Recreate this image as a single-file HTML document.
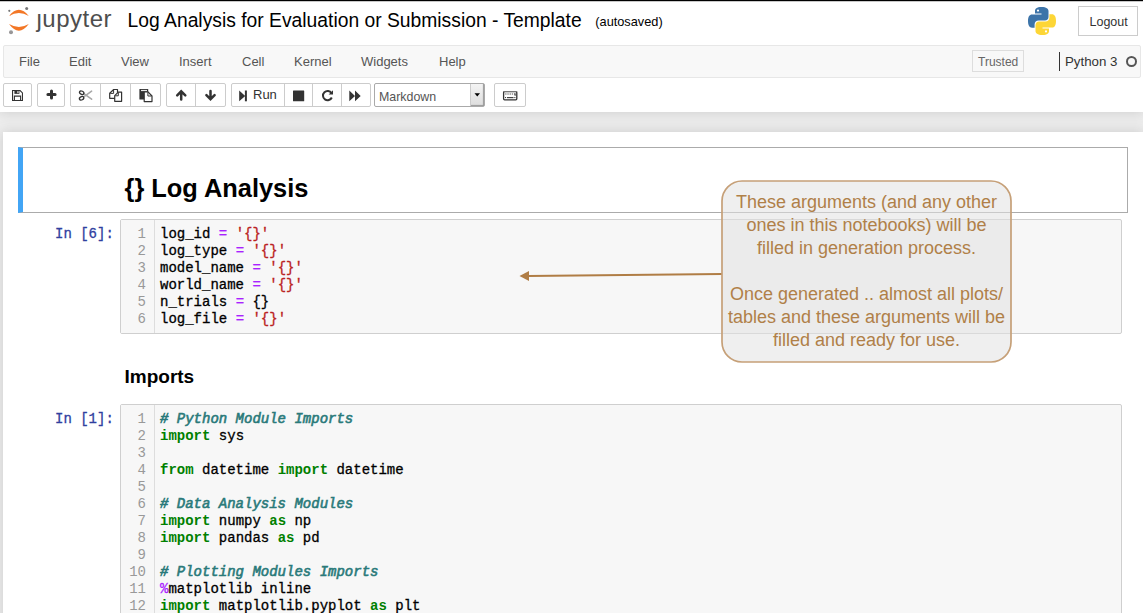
<!DOCTYPE html>
<html><head><meta charset="utf-8">
<style>
*{box-sizing:border-box}
html,body{margin:0;padding:0}
body{width:1143px;height:613px;overflow:hidden;position:relative;background:#eeeeee;font-family:"Liberation Sans",sans-serif;color:#000}
.a{position:absolute;white-space:pre;line-height:1}
#hdr{position:absolute;left:0;top:0;width:1143px;height:112px;background:#fff;box-shadow:0 0 12px 1px rgba(87,87,87,0.2);z-index:2}
#topline{position:absolute;left:0;top:0;width:1143px;height:1px;background:#000;z-index:5}
#topline2{position:absolute;left:0;top:1px;width:1143px;height:1px;background:#c8c8c8;z-index:5}
.menubar{position:absolute;left:3px;top:45px;width:1138px;height:33px;background:#f8f8f8;border:1px solid #e7e7e7;border-radius:2px}
.mi{position:absolute;top:9px;font-size:13px;color:#555;line-height:1}
.btn{position:absolute;top:83px;height:24px;border:1px solid #ccc;border-radius:2px;background:#fff}
.sep{position:absolute;top:84px;height:22px;width:1px;background:#ccc}
#nb{position:absolute;left:3px;top:132px;width:1140px;height:500px;background:#fff;box-shadow:0 0 12px 1px rgba(87,87,87,0.2);z-index:1}
.mono{font-family:"Liberation Mono",monospace}
.input{position:absolute;left:120px;width:1002px;background:#f7f7f7;border:1px solid #cfcfcf;border-radius:2px}
.gut{position:absolute;left:0;top:0;bottom:0;width:34px;border-right:1px solid #ddd;background:#f7f7f7}
.ln{position:absolute;right:8px;color:#999;font-size:14px;line-height:17px;text-align:right}
.code{position:absolute;left:39px;font-size:14px;line-height:17px;color:#000;white-space:pre;-webkit-text-stroke:0.3px currentColor}
.prompt{position:absolute;color:#303F9F;font-size:14px;line-height:17px;white-space:pre;-webkit-text-stroke:0.3px currentColor}
.k{color:#008000;font-weight:bold;-webkit-text-stroke:0}
.o{color:#AA22FF}
.s{color:#BA2121}
.c{color:#2a7a7a;font-style:italic;-webkit-text-stroke:0.6px currentColor}
</style></head>
<body>
<div id="topline"></div><div id="topline2"></div>
<div id="hdr">
  <!-- jupyter logo -->
  <svg style="position:absolute;left:0;top:0" width="36" height="36" viewBox="0 0 36 36">
    <path d="M9 16 Q18.9 3.3 28.8 16 Q18.9 10.2 9 16Z" fill="#F37726"/>
    <path d="M9 24.1 Q18.9 37.3 28.8 24.1 Q18.9 29.9 9 24.1Z" fill="#F37726"/>
    <circle cx="26.7" cy="8.6" r="1.5" fill="#767677"/>
    <circle cx="9.3" cy="10.8" r="1.1" fill="#767677"/>
    <circle cx="11" cy="32.3" r="2" fill="#989798"/>
  </svg>
  <div class="a" style="left:36.5px;top:6.7px;font-size:24px;color:#4e4e4e;letter-spacing:0.5px">&#x237;upyter</div>
  <div class="a" style="left:127.6px;top:11.2px;font-size:19.3px;color:#000">Log Analysis for Evaluation or Submission - Template</div>
  <div class="a" style="left:595.3px;top:15.7px;font-size:12.75px;color:#000">(autosaved)</div>
  <!-- python logo -->
  <svg style="position:absolute;left:1028px;top:7px" width="28" height="28" viewBox="0 0 28 28">
    <defs><path id="py" d="M13.5 0 C8.5 0 7 1.8 7 4 L7 6.6 L13.5 6.6 L13.5 7.4 L4 7.4 C1.5 7.4 0 9.5 0 14 C0 18.5 1.5 20.7 4 20.7 L6.6 20.7 L6.6 17.5 C6.6 15 8.4 13.6 10.5 13.6 L17 13.6 C19 13.6 20.5 12 20.5 10 L20.5 4 C20.5 1.8 18.5 0 13.5 0Z"/></defs>
    <use href="#py" fill="#3D74A9"/>
    <circle cx="10" cy="3.6" r="1.1" fill="#fff"/>
    <use href="#py" fill="#FDD636" transform="rotate(180 14 14)"/>
    <circle cx="18" cy="24.4" r="1.1" fill="#fff"/>
  </svg>
  <div class="btn" style="left:1078px;top:6px;width:60px;height:30px;border-color:#ccc;border-radius:0"></div>
  <div class="a" style="left:1089.5px;top:15.5px;font-size:12.5px;color:#333">Logout</div>

  <div class="menubar"></div>
  <div class="a mi" style="left:19px;top:55px">File</div>
  <div class="a mi" style="left:69px;top:55px">Edit</div>
  <div class="a mi" style="left:121px;top:55px">View</div>
  <div class="a mi" style="left:179px;top:55px">Insert</div>
  <div class="a mi" style="left:242px;top:55px">Cell</div>
  <div class="a mi" style="left:294px;top:55px">Kernel</div>
  <div class="a mi" style="left:361px;top:55px">Widgets</div>
  <div class="a mi" style="left:439px;top:55px">Help</div>

  <div style="position:absolute;left:972px;top:50px;width:52px;height:22px;border:1px solid #ddd;background:#f8f8f8"></div>
  <div class="a" style="left:978px;top:56px;font-size:12px;color:#666">Trusted</div>
  <div style="position:absolute;left:1059px;top:52px;width:1px;height:19px;background:#333"></div>
  <div class="a" style="left:1065px;top:55px;font-size:13.3px;color:#333">Python 3</div>
  <div style="position:absolute;left:1126px;top:56px;width:11px;height:11px;border:2px solid #555;border-radius:50%"></div>

  <!-- toolbar -->
  <div class="btn" style="left:3px;width:29px"></div>
  <div class="btn" style="left:37px;width:28px"></div>
  <div class="btn" style="left:70px;width:91px"></div>
  <div class="sep" style="left:100px"></div><div class="sep" style="left:130px"></div>
  <div class="btn" style="left:166px;width:60px"></div>
  <div class="sep" style="left:195px"></div>
  <div class="btn" style="left:231px;width:140px"></div>
  <div class="sep" style="left:284px"></div><div class="sep" style="left:312px"></div><div class="sep" style="left:341px"></div>
  <div class="btn" style="left:374px;width:111px;border-color:#aaa"></div>
  <div class="a" style="left:379px;top:91px;font-size:12.4px;color:#555">Markdown</div>
  <div style="position:absolute;left:470px;top:84px;width:14px;height:22px;background:linear-gradient(#f4f4f4,#ddd);border-left:1px solid #ccc;box-shadow:inset -1px -1px 1px #999"></div>
  <svg style="position:absolute;left:474px;top:93px" width="7" height="5"><path d="M0.5 0.2 L6 0.2 L3.25 3.5Z" fill="#000"/></svg>
  <div class="btn" style="left:494px;width:32px"></div>

  <!-- icons -->
  <svg style="position:absolute;left:12px;top:90px" width="11" height="11" viewBox="0 0 11 11">
    <path d="M0.55 0.55 H8.1 L10.45 2.9 V10.45 H0.55Z" fill="none" stroke="#333" stroke-width="1.1"/>
    <rect x="2.4" y="0.55" width="5" height="3.3" fill="#333"/>
    <rect x="5.4" y="1.1" width="1.1" height="2" fill="#fff"/>
    <path d="M2.4 10.45 V6.1 H8.6 V10.45" fill="none" stroke="#333" stroke-width="1.1"/>
  </svg>
  <svg style="position:absolute;left:45.7px;top:89.4px" width="11" height="11" viewBox="0 0 11 11">
    <path d="M5.5 1.9 V9.1 M1.9 5.5 H9.1" stroke="#333" stroke-width="3" stroke-linecap="round"/>
  </svg>
  <svg style="position:absolute;left:74px;top:84px" width="24" height="22" viewBox="0 0 24 22">
    <path d="M9.8 9.6 L17.6 15.2 M9.8 12.8 L17.6 7.2" stroke="#a8a8a8" stroke-width="1.6" stroke-linecap="round"/>
    <ellipse cx="7.7" cy="8.7" rx="2.3" ry="1.6" fill="none" stroke="#333" stroke-width="1.3" transform="rotate(28 7.7 8.7)"/>
    <ellipse cx="7.6" cy="14.3" rx="2.3" ry="1.6" fill="none" stroke="#333" stroke-width="1.3" transform="rotate(-28 7.6 14.3)"/>
  </svg>
  <svg style="position:absolute;left:104px;top:84px" width="54" height="22" viewBox="0 0 54 22">
    <path d="M5.7 9.2 L9.7 5.5 H13.5 V14.3 H5.7 Z" fill="#fff" stroke="#333" stroke-width="1.2" stroke-linejoin="round"/>
    <path d="M6.2 9.4 H9.6 V5.9" fill="none" stroke="#333" stroke-width="1"/>
    <path d="M10.7 11.6 L14.3 8.1 H17.6 V17.3 H10.7 Z" fill="#fff" stroke="#333" stroke-width="1.2" stroke-linejoin="round"/>
    <path d="M11.2 11.8 H14.3 V8.5" fill="none" stroke="#333" stroke-width="1"/>
    <rect x="35.4" y="5" width="8.8" height="10.6" rx="0.6" fill="#333"/>
    <rect x="37" y="5.9" width="6" height="1.2" fill="#e8e8e8"/>
    <path d="M40.2 7.8 H44 L48 12 V17.6 H40.2 Z" fill="#fff" stroke="#333" stroke-width="1.2" stroke-linejoin="round"/>
    <path d="M43.9 8.2 V12 H47.6" fill="none" stroke="#333" stroke-width="1"/>
  </svg>
  <svg style="position:absolute;left:175px;top:89px" width="13" height="13" viewBox="0 0 13 13">
    <path d="M6.2 10.6 V3 M2.2 6.4 L6.2 2.3 L10.3 6.4" fill="none" stroke="#333" stroke-width="2.5" stroke-linecap="round" stroke-linejoin="miter"/>
  </svg>
  <svg style="position:absolute;left:204px;top:89px" width="13" height="13" viewBox="0 0 13 13">
    <path d="M6.5 1.9 V9.5 M2.4 6.1 L6.5 10.2 L10.6 6.1" fill="none" stroke="#333" stroke-width="2.5" stroke-linecap="round" stroke-linejoin="miter"/>
  </svg>
  <svg style="position:absolute;left:239px;top:89.5px" width="10" height="12" viewBox="0 0 10 12">
    <path d="M0.2 0.5 L6.2 5.9 L0.2 11.3Z" fill="#333"/><rect x="5.9" y="0.5" width="2" height="10.8" fill="#333"/>
  </svg>
  <div class="a" style="left:253px;top:88.3px;font-size:13px;color:#333">Run</div>
  <svg style="position:absolute;left:293px;top:89.5px" width="12" height="12"><rect x="0" y="0.5" width="11.2" height="10.8" rx="0.4" fill="#333"/></svg>
  <svg style="position:absolute;left:320.5px;top:89px" width="13" height="13" viewBox="0 0 13 13">
    <path d="M10.5 4.2 A4.6 4.6 0 1 0 10.8 8.5" fill="none" stroke="#333" stroke-width="2"/>
    <path d="M12 1.2 V5.6 H7.6Z" fill="#333"/>
  </svg>
  <svg style="position:absolute;left:349px;top:89.5px" width="14" height="12" viewBox="0 0 14 12">
    <path d="M0.3 0.5 L6 5.9 L0.3 11.3Z M6 0.5 L11.7 5.9 L6 11.3Z" fill="#333"/>
  </svg>
  <svg style="position:absolute;left:502px;top:90px" width="16" height="11" viewBox="0 0 16 11">
    <rect x="1.6" y="1.6" width="13.2" height="8.2" rx="1" fill="none" stroke="#333" stroke-width="1.3"/>
    <rect x="1.2" y="1" width="14" height="1" fill="#777"/>
    <path d="M3.2 4 H13.2" stroke="#888" stroke-width="1.3" stroke-dasharray="1.3 0.9"/>
    <rect x="3" y="7" width="1.1" height="1.1" fill="#444"/>
    <rect x="12.3" y="7" width="1.1" height="1.1" fill="#444"/>
    <rect x="5" y="7" width="6.5" height="1.2" fill="#444"/>
    <rect x="12.6" y="3.4" width="1" height="2.4" fill="#333"/>
  </svg>
</div>

<div id="nb">
</div>

<div style="position:absolute;left:0;top:0;z-index:3">
  <!-- markdown cell -->
  <div style="position:absolute;left:18px;top:147px;width:1110px;height:66px;border:1px solid #ababab;border-left:5px solid #42A5F5;border-radius:0"></div>
  <div class="a" style="left:124.5px;top:175.5px;font-size:25.4px;font-weight:bold">{} Log Analysis</div>

  <!-- code cell 1 -->
  <div class="prompt mono" style="left:55px;top:226px">In [6]:</div>
  <div class="input mono" style="top:219px;height:115px">
    <div class="gut"></div>
    <div class="ln" style="top:6px;left:0;width:25px">1<br>2<br>3<br>4<br>5<br>6</div>
    <div class="code" style="top:6px">log_id <span class="o">=</span> <span class="s">'{}'</span>
log_type <span class="o">=</span> <span class="s">'{}'</span>
model_name <span class="o">=</span> <span class="s">'{}'</span>
world_name <span class="o">=</span> <span class="s">'{}'</span>
n_trials <span class="o">=</span> {}
log_file <span class="o">=</span> <span class="s">'{}'</span></div>
  </div>

  <div class="a" style="left:124.5px;top:367px;font-size:19px;font-weight:bold">Imports</div>

  <!-- code cell 2 -->
  <div class="prompt mono" style="left:55px;top:411px">In [1]:</div>
  <div class="input mono" style="top:404px;height:260px">
    <div class="gut"></div>
    <div class="ln" style="top:6px;left:0;width:25px">1<br>2<br>3<br>4<br>5<br>6<br>7<br>8<br>9<br>10<br>11<br>12<br>13</div>
    <div class="code" style="top:6px"><span class="c"># Python Module Imports</span>
<span class="k">import</span> sys

<span class="k">from</span> datetime <span class="k">import</span> datetime

<span class="c"># Data Analysis Modules</span>
<span class="k">import</span> numpy <span class="k">as</span> np
<span class="k">import</span> pandas <span class="k">as</span> pd

<span class="c"># Plotting Modules Imports</span>
<span class="o">%</span>matplotlib inline
<span class="k">import</span> matplotlib.pyplot <span class="k">as</span> plt</div>
  </div>
</div>

<!-- annotation -->
<svg style="position:absolute;left:0;top:0;z-index:4" width="1143" height="613">
  <path d="M722 274 L528 276" stroke="#B07D45" stroke-width="2"/>
  <path d="M519.5 276 L529 271 L529 281Z" fill="#B07D45"/>
  <rect x="722" y="181" width="289" height="181" rx="20" ry="20" fill="rgba(225,225,225,0.55)" stroke="#C6A078" stroke-width="1.7"/>
</svg>
<div style="position:absolute;left:722px;top:191px;width:289px;z-index:5;text-align:center;font-size:18px;line-height:23px;color:#B08048">These arguments (and any other<br>ones in this notebooks) will be<br>filled in generation process.<br><br>Once generated .. almost all plots/<br>tables and these arguments will be<br>filled and ready for use.</div>
</body></html>
